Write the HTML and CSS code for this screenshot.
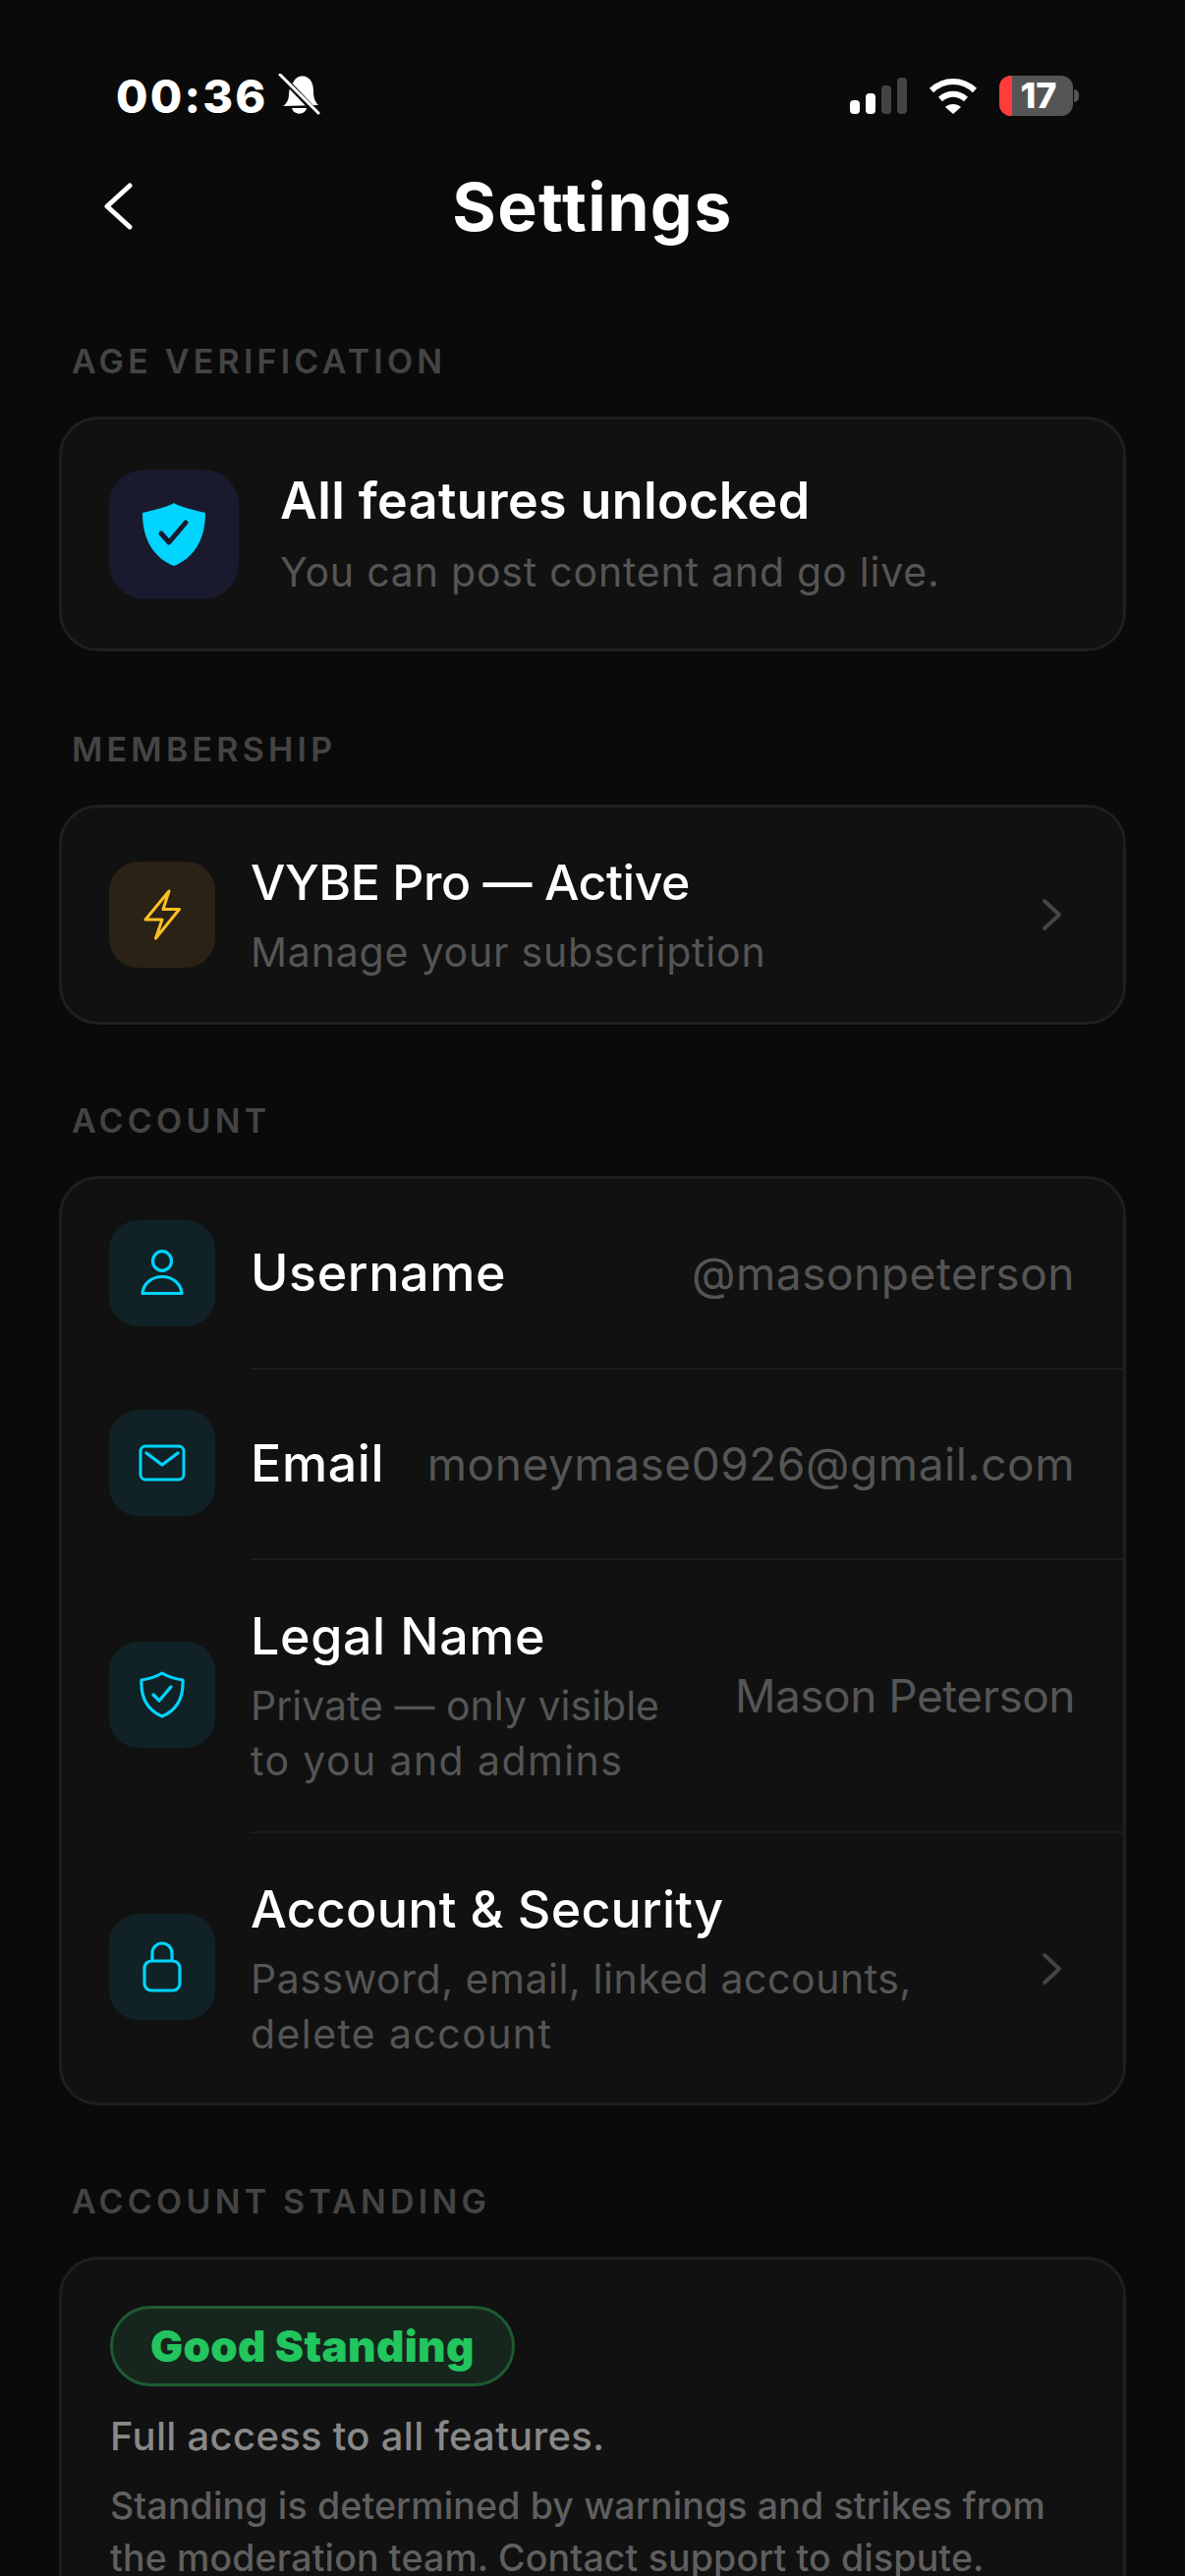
FILE: index.html
```html
<!DOCTYPE html>
<html lang="en">
  <head>
    <meta charset="UTF-8" />
    <meta name="viewport" content="width=device-width, initial-scale=1.0" />
    <title>Settings</title>
    <link rel="stylesheet" href="styles.css">
  </head>

  <body>
    <div class="statusbar">
      <div class="status-left">
        <span class="time">00:36</span>
        <svg class="bell" width="44" height="44" viewBox="0 0 44 44">
          <path fill="#fff" d="M17 8 C19 3 26 1 31 4 C36 7 37 13 37 18 C37 25 39 29 42 32 L6 33 C9 31 12 27 12 21 C12 16 14 11 17 8 Z M15 35 H30 C29 42 17 43 15 35 Z" />
          <path stroke="#0a0a0a" stroke-width="6" d="M2 0 L42 42" />
          <path stroke="#fff" stroke-width="3" stroke-linecap="round" d="M3 1 L42 40" />
        </svg>
      </div>
      <div class="status-right">
        <div class="signal">
          <span class="bar bar1"></span>
          <span class="bar bar2"></span>
          <span class="bar bar3 off"></span>
          <span class="bar bar4 off"></span>
        </div>
        <svg class="wifi" width="50" height="37" viewBox="0 0 50 37">
          <path fill="none" stroke="#fff" stroke-width="6" d="M3 13 C16 1 34 1 47 13" />
          <path fill="none" stroke="#fff" stroke-width="6" d="M12 22 C20 15 30 15 38 22" />
          <path fill="#fff" d="M17 30 C21 26 29 26 33 30 L25 37 Z" />
        </svg>
        <div class="battery"><span class="battery-low"></span><span class="battery-num">17</span></div>
      </div>
    </div>

    <div class="nav">
      <svg class="back" width="30" height="48" viewBox="0 0 30 48">
        <path fill="none" stroke="#fff" stroke-width="5" stroke-linecap="round" stroke-linejoin="round" d="M27 3 L4 24 L27 45" />
      </svg>
      <h1>Settings</h1>
    </div>

    <div class="section">
      <h2>AGE VERIFICATION</h2>
      <div class="card">
        <div class="row row-big">
          <div class="icon icon-navy">
            <svg width="64" height="64" viewBox="0 0 64 64">
              <path fill="#00d4ff" d="M32 0 C37 3 50 7 64 10 C64 38 52 56 32 64 C12 56 0 38 0 10 C14 7 27 3 32 0 Z" />
              <path fill="none" stroke="#1a1a2e" stroke-width="5" stroke-linecap="round" stroke-linejoin="round" d="M19 31 L27 40 L44 20" />
            </svg>
          </div>
          <div class="row-body">
            <div class="row-text">
              <div class="title bold">All features unlocked</div>
              <div class="sub">You can post content and go live.</div>
            </div>
          </div>
        </div>
      </div>
    </div>

    <div class="section section-membership">
      <h2>MEMBERSHIP</h2>
      <div class="card">
        <div class="row row-single">
          <div class="icon icon-gold">
            <svg width="38" height="52" viewBox="0 0 38 52">
              <path fill="none" stroke="#fbbf24" stroke-width="3" stroke-linecap="round" stroke-linejoin="round" d="M26 2 L2 31 H19 L12.5 50 L36.5 20.5 H20 Z" />
            </svg>
          </div>
          <div class="row-body">
            <div class="row-text">
              <div class="title title-tight">VYBE Pro — Active</div>
              <div class="sub">Manage your subscription</div>
            </div>
            <svg class="chevron" width="22" height="34" viewBox="0 0 22 34">
              <path fill="none" stroke="#444" stroke-width="4" stroke-linecap="round" stroke-linejoin="round" d="M3 3 L18 17 L3 31" />
            </svg>
          </div>
        </div>
      </div>
    </div>

    <div class="section">
      <h2>ACCOUNT</h2>
      <div class="card">
        <div class="row">
          <div class="icon icon-cyan">
            <svg width="48" height="48" viewBox="0 0 48 48">
              <ellipse cx="24" cy="11.5" rx="9.5" ry="9.8" fill="none" stroke="#00d4ff" stroke-width="3.2" />
              <path fill="none" stroke="#00d4ff" stroke-width="3.2" stroke-linejoin="round" d="M4 44.5 C5 34 14 27.5 24 27.5 S43 34 44 44.5 Z" />
            </svg>
          </div>
          <div class="row-body">
            <div class="title">Username</div>
            <div class="value">@masonpeterson</div>
          </div>
        </div>
        <div class="row">
          <div class="icon icon-cyan">
            <svg width="48" height="38" viewBox="0 0 48 38">
              <rect x="2" y="2" width="44" height="34" rx="5" fill="none" stroke="#00d4ff" stroke-width="3" />
              <path fill="none" stroke="#00d4ff" stroke-width="3.4" stroke-linecap="round" stroke-linejoin="round" d="M8 9 L24 21 L40 9" />
            </svg>
          </div>
          <div class="row-body">
            <div class="title">Email</div>
            <div class="value">moneymase0926@gmail.com</div>
          </div>
        </div>
        <div class="row">
          <div class="icon icon-cyan">
            <svg width="46" height="48" viewBox="0 0 46 48">
              <path fill="none" stroke="#00d4ff" stroke-width="3.2" stroke-linejoin="round" d="M23 2 C28 5 37 8 44 9 C45 28 37 40 23 46 C9 40 1 28 2 9 C9 8 18 5 23 2 Z" />
              <path fill="none" stroke="#00d4ff" stroke-width="3.4" stroke-linecap="round" stroke-linejoin="round" d="M14 24 L20 30 L32 16" />
            </svg>
          </div>
          <div class="row-body">
            <div class="row-text">
              <div class="title">Legal Name</div>
              <div class="sub"><span class="narrow">Private — only visible</span><br><span class="wide">to you and admins</span></div>
            </div>
            <div class="value value-tight">Mason Peterson</div>
          </div>
        </div>
        <div class="row">
          <div class="icon icon-cyan">
            <svg width="40" height="52" viewBox="0 0 40 52">
              <rect x="2" y="20" width="36" height="30" rx="7" fill="none" stroke="#00d4ff" stroke-width="3.2" />
              <path fill="none" stroke="#00d4ff" stroke-width="3.2" d="M10 20 V12 A10 10 0 0 1 30 12 V20" />
            </svg>
          </div>
          <div class="row-body row-last">
            <div class="row-text">
              <div class="title title-snug">Account &amp; Security</div>
              <div class="sub"><span class="snug">Password, email, linked accounts,</span><br><span class="wide">delete account</span></div>
            </div>
            <svg class="chevron" width="22" height="34" viewBox="0 0 22 34">
              <path fill="none" stroke="#444" stroke-width="4" stroke-linecap="round" stroke-linejoin="round" d="M3 3 L18 17 L3 31" />
            </svg>
          </div>
        </div>
      </div>
    </div>

    <div class="section">
      <h2>ACCOUNT STANDING</h2>
      <div class="card standing">
        <span class="badge">Good Standing</span>
        <p class="standing-lead">Full access to all features.</p>
        <p class="standing-note">Standing is determined by warnings and strikes from<br>the moderation team. Contact support to dispute.</p>
      </div>
    </div>
  </body>
</html>
```

FILE: styles.css
```css
html,
body {
  height: 2622px;
  overflow: hidden;
}

body {
  margin: 0;
  font-family: Inter, "Noto Sans", sans-serif;
  background-color: #0a0a0a;
  color: #ffffff;
}

.statusbar {
  display: flex;
  justify-content: space-between;
  align-items: center;
  height: 74px;
  padding: 60px 114px 0 118px;
}

.status-left {
  display: flex;
  align-items: center;
  gap: 9px;
}

.time {
  font-size: 47px;
  font-weight: 800;
  letter-spacing: 2.2px;
}

.status-right {
  display: flex;
  align-items: center;
  gap: 22px;
}

.signal {
  display: flex;
  align-items: flex-end;
  gap: 6px;
  height: 37px;
}

.bar {
  width: 10px;
  background-color: #ffffff;
  border-radius: 4px;
}

.bar.off {
  background-color: #444444;
}

.bar1 {
  height: 14px;
}

.bar2 {
  height: 21px;
}

.bar3 {
  height: 29px;
}

.bar4 {
  height: 37px;
}

.battery {
  display: flex;
  position: relative;
  width: 75px;
  height: 41px;
  border-radius: 12px;
  background-color: #555555;
}

.battery::after {
  content: "";
  position: absolute;
  right: -6px;
  top: 14px;
  width: 5px;
  height: 13px;
  border-radius: 0 6px 6px 0;
  background-color: #555555;
}

.battery-low {
  width: 13px;
  border-radius: 12px 0 0 12px;
  background-color: #ff3b3b;
}

.battery-num {
  flex: 1;
  font-size: 36px;
  font-weight: 800;
  line-height: 41px;
  text-align: center;
  padding-right: 8px;
}

.nav {
  display: flex;
  align-items: center;
  justify-content: center;
  position: relative;
  height: 152px;
}

.back {
  position: absolute;
  left: 105px;
  top: 52px;
}

h1 {
  margin: 0;
  font-size: 68px;
  font-weight: 700;
  letter-spacing: 1.4px;
}

.section {
  padding: 0 60px;
  margin-top: 71px;
}

.nav + .section {
  margin-top: 55px;
}

.section-membership {
  margin-top: 73px;
}

h2 {
  margin: 0 0 29px 13px;
  font-size: 34px;
  font-weight: 600;
  line-height: 54px;
  letter-spacing: 4.2px;
  color: #444444;
}

.card {
  background-color: #111111;
  border: 3px solid #1f1f1f;
  border-radius: 40px;
}

.row {
  display: flex;
  align-items: center;
  padding-left: 48px;
}

.icon {
  display: flex;
  flex-shrink: 0;
  align-items: center;
  justify-content: center;
  width: 108px;
  height: 108px;
  margin-right: 36px;
  border-radius: 30px;
}

.icon-navy {
  width: 132px;
  height: 132px;
  margin-right: 42px;
  border-radius: 36px;
  background-color: #1a1a2e;
}

.icon-gold {
  background-color: #2a2215;
}

.icon-cyan {
  background-color: #102226;
}

.row-body {
  display: flex;
  flex: 1;
  align-items: center;
  justify-content: space-between;
  min-height: 108px;
  padding: 42px 49px 42px 0;
  border-top: 2px solid #1c1c1c;
}

.row:first-child .row-body {
  border-top: none;
}

.row-big .row-body {
  padding-top: 46px;
  padding-bottom: 48px;
}

.row-single .row-body {
  padding-top: 41px;
  padding-bottom: 41px;
}

.row-body.row-last {
  padding-bottom: 40px;
}

.row-text {
  padding-bottom: 2px;
}

.chevron {
  margin-right: 12px;
}

.title {
  font-size: 52px;
  font-weight: 500;
  line-height: 71px;
  padding-bottom: 4px;
  letter-spacing: 0.6px;
  white-space: nowrap;
}

.row-body > .title {
  padding-bottom: 2px;
}

.title.bold {
  font-weight: 600;
  line-height: 74px;
  letter-spacing: 0.4px;
}

.title.title-tight {
  font-size: 50px;
  letter-spacing: -0.45px;
}

.title.title-snug {
  letter-spacing: 0.2px;
}

.sub {
  margin-top: 3px;
  font-size: 41px;
  line-height: 56px;
  letter-spacing: 0.8px;
  color: #555555;
  white-space: nowrap;
}

.sub .narrow {
  letter-spacing: 0;
}

.sub .snug {
  letter-spacing: 0.55px;
}

.sub .wide {
  letter-spacing: 1.4px;
}

.value {
  font-size: 46px;
  letter-spacing: 0.55px;
  color: #555555;
  white-space: nowrap;
}

.value.value-tight {
  letter-spacing: -0.5px;
}

.standing {
  padding: 47px 49px 80px;
}

.badge {
  display: inline-block;
  padding: 0 38px;
  font-size: 44px;
  font-weight: 900;
  letter-spacing: 0.3px;
  line-height: 76px;
  color: #22c55e;
  background-color: #16261c;
  border: 3px solid #1e5a30;
  border-radius: 41px;
}

.standing-lead {
  margin: 24px 0 0;
  font-size: 40px;
  font-weight: 500;
  line-height: 54px;
  letter-spacing: 0.3px;
  color: #888888;
}

.standing-note {
  margin: 17px 0 0;
  font-size: 37.5px;
  font-weight: 500;
  line-height: 53px;
  letter-spacing: 0.15px;
  color: #5f5f5f;
  white-space: nowrap;
}
```
